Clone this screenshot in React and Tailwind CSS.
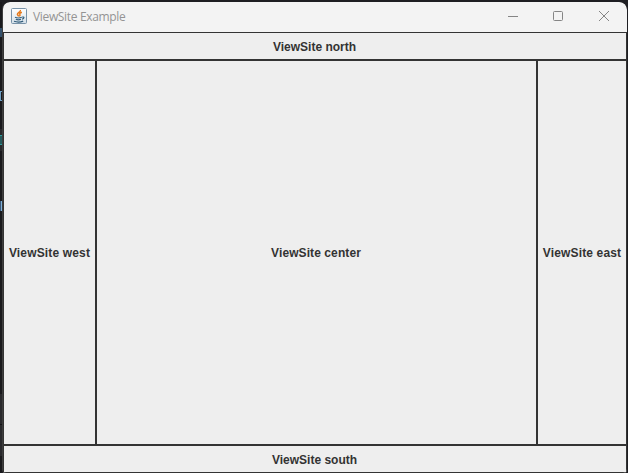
const javaFont = "font-['Liberation_Sans',Arial,sans-serif] text-[12px] leading-[14px] font-bold text-[#333333] whitespace-nowrap";

function Site({ children, className, textClassName = "" }) {
  return (
    <div className={`flex items-center justify-center border border-[#333333] bg-[#eeeeee] ${className}`}>
      <span className={`${javaFont} ${textClassName}`}>{children}</span>
    </div>
  );
}

function JavaIcon() {
  return (
    <svg width="16" height="16" viewBox="0 0 16 16" fill="none" className="shrink-0">
      <defs>
        <linearGradient id="tile" x1="0" y1="0" x2="0" y2="1">
          <stop offset="0" stopColor="#ffffff" />
          <stop offset="1" stopColor="#d3dfe8" />
        </linearGradient>
      </defs>
      <rect x="0.5" y="0.5" width="15" height="15" rx="1" fill="url(#tile)" stroke="#7892a8" />
      <path d="M9.4 2C10 4 6.4 4.4 6.4 6.2c0 1 1 1.2 1.2 2.1M10.9 4.3C9 4.9 8.2 5.8 8.9 6.6c.4.6.1 1.1-.6 1.7" stroke="#e67a1c" strokeWidth="1.5" />
      <path d="M4 9.3c1.4.6 5.2.6 6.8 0M4.8 11.3c1.2.5 3.9.5 5.2 0M3 13.3c2.5.8 7 .7 9.2-.2M11.2 9.1c2.4-.5 2.2 1.6-.2 2.1" stroke="#355f7d" strokeWidth="1.2" />
    </svg>
  );
}

export default function App() {
  return (
    <div className="flex h-[473px] w-[628px] overflow-hidden bg-[#1e1e22] pt-[2px]">
      <div className="flex w-[2px] shrink-0 flex-col overflow-hidden bg-[#19191c]">
        <div className="mt-[26px] h-[9px] w-[2px] bg-[#34506b]" />
        <div className="mt-[54px] h-[10px] w-[2px] border-y border-l border-[#6f9fc4]" />
        <div className="mt-[28px] h-[22px] w-[2px] bg-[#28282b] pt-[6px]">
          <div className="h-[10px] w-[2px] border-y border-[#2f9c9c] bg-[#25595c]" />
        </div>
        <div className="mt-[50px] flex h-[10px] w-[2px]">
          <div className="w-px bg-[#39587a]" />
          <div className="w-px bg-[#7fb0d8]" />
        </div>
        <div className="mt-[183px] h-[62px] w-[2px] bg-[#29292c] pt-[30px]">
          <div className="h-px bg-[#141416]" />
        </div>
      </div>
      <div className="flex h-[471px] w-[625px] flex-col overflow-hidden rounded-t-[8px] rounded-b-[4px] bg-[#3d3d3d]">
        <header className="ml-px flex h-[30px] shrink-0 items-center rounded-t-[7px] bg-[#f3f3f3] pl-[8px]">
          <div className="pb-[2px]">
            <JavaIcon />
          </div>
          <span className="ml-[6px] pb-px font-['Open_Sans','Noto_Sans',sans-serif] text-[12px] leading-4 tracking-[-0.34px] text-[#949494]">
            ViewSite Example
          </span>
          <svg width="102" height="12" viewBox="0 0 102 12" fill="none" stroke="#858585" className="mr-[17px] ml-auto shrink-0">
            <path d="M0 5.5h10" />
            <rect x="45.5" y="0.5" width="9" height="9" rx="1" />
            <path d="M91 0l10 10M101 0L91 10" />
          </svg>
        </header>
        <main className="flex min-h-0 flex-1 flex-col pl-px">
          <Site className="h-[28px] shrink-0 pt-[2px] pr-px">ViewSite north</Site>
          <div className="flex min-h-0 flex-1">
            <Site className="w-[93px]" textClassName="tracking-[0.15px]">ViewSite west</Site>
            <Site className="flex-1 pr-px" textClassName="tracking-[0.09px]">ViewSite center</Site>
            <Site className="w-[90px]" textClassName="tracking-[0.15px]">ViewSite east</Site>
          </div>
          <Site className="h-[28px] shrink-0 pt-[2px] pr-px">ViewSite south</Site>
        </main>
      </div>
    </div>
  );
}
